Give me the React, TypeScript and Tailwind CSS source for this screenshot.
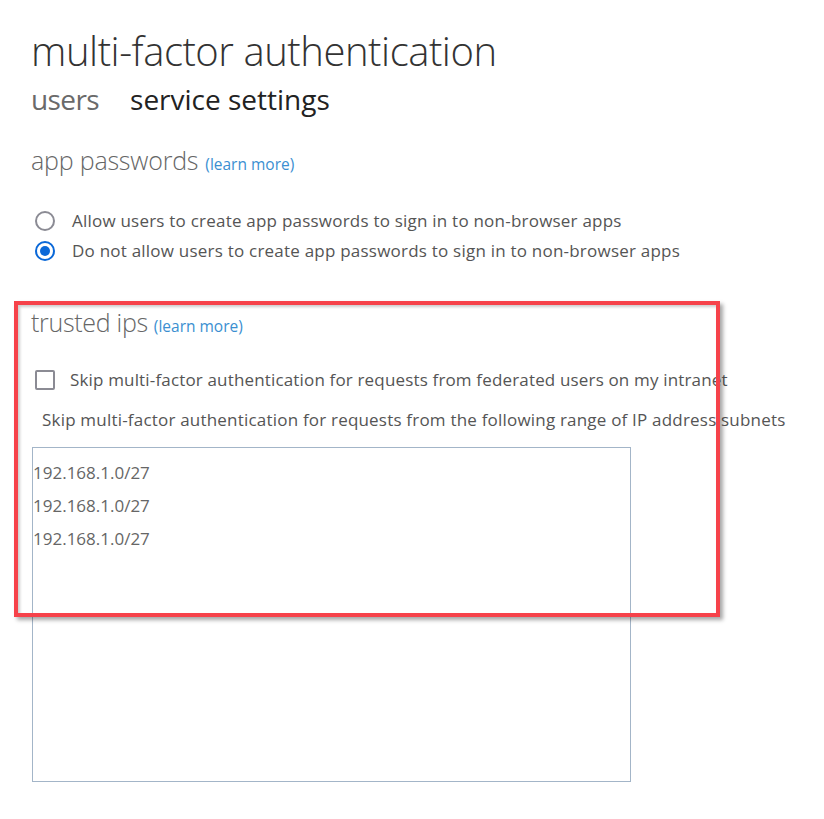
import React from "react";

const font = { fontFamily: '"Open Sans", "Noto Sans", sans-serif' };

function Radio({ checked }: { checked?: boolean }) {
  return checked ? (
    <span className="flex h-[20px] w-[20px] shrink-0 items-center justify-center rounded-full border-[2px] border-[#0a68d8]">
      <span className="h-[10px] w-[10px] rounded-full bg-[#0a68d8]" />
    </span>
  ) : (
    <span className="h-[20px] w-[20px] shrink-0 rounded-full border-[2px] border-[#8b8b94]" />
  );
}

export default function App() {
  return (
    <div className="relative h-[819px] w-[824px] overflow-hidden bg-white" style={font}>
      <div className="pl-[31px] pt-[26px]">
        <h1 className="h-[50px] text-[40px] font-light leading-[50px] tracking-[-0.45px] text-[#333]">
          multi-factor authentication
        </h1>
        <div className="mt-[3px] flex h-[40px] items-center gap-[31px] text-[28px] leading-[40px]">
          <span className="tracking-[-0.6px] text-[#6a6a6a]">users</span>
          <span className="text-[#222]">service settings</span>
        </div>
        <div className="mt-[23px] flex h-[40px] items-baseline gap-[7px]">
          <span className="text-[25px] font-light tracking-[-0.2px] text-[#666]">app passwords</span>
          <span className="text-[15.5px] text-[#3b8fd1]">(learn more)</span>
        </div>
      </div>

      <div className="mt-[29px] flex flex-col gap-[10px] pl-[35px] text-[17px] tracking-[0.22px] text-[#555]">
        <div className="flex h-[20px] items-center gap-[17px]">
          <Radio />
          <span className="whitespace-nowrap">Allow users to create app passwords to sign in to non-browser apps</span>
        </div>
        <div className="flex h-[20px] items-center gap-[17px]">
          <Radio checked />
          <span className="whitespace-nowrap">Do not allow users to create app passwords to sign in to non-browser apps</span>
        </div>
      </div>

      <div className="mt-[43px] flex h-[40px] items-baseline gap-[6px] pl-[31px]">
        <span className="text-[25px] font-light tracking-[-0.3px] text-[#666]">trusted ips</span>
        <span className="text-[15.5px] text-[#3b8fd1]">(learn more)</span>
      </div>

      <div className="mt-[26px] flex h-[20px] items-center gap-[15px] pl-[35px] text-[17px] tracking-[0.16px] text-[#555]">
        <span className="h-[20px] w-[20px] shrink-0 rounded-[2px] border-[2px] border-[#8b8b94]" />
        <span className="whitespace-nowrap">Skip multi-factor authentication for requests from federated users on my intranet</span>
      </div>

      <div className="mt-[20px] h-[20px] whitespace-nowrap pl-[42px] text-[17px] leading-[20px] tracking-[0.2px] text-[#555]">
        Skip multi-factor authentication for requests from the following range of IP address subnets
      </div>

      <div className="ml-[32px] mt-[17px] h-[335px] w-[599px] border border-[#a3b5c8] pt-[8px] text-[17px] text-[#666]">
        <div className="leading-[33px]">192.168.1.0/27</div>
        <div className="leading-[33px]">192.168.1.0/27</div>
        <div className="leading-[33px]">192.168.1.0/27</div>
      </div>

      <div className="pointer-events-none absolute left-[14px] top-[301px] h-[316px] w-[706px] border-[4px] border-[#f6424a] shadow-[3px_3px_4px_rgba(0,0,0,0.35),inset_2px_2px_3px_rgba(0,0,0,0.2)]" />
    </div>
  );
}
